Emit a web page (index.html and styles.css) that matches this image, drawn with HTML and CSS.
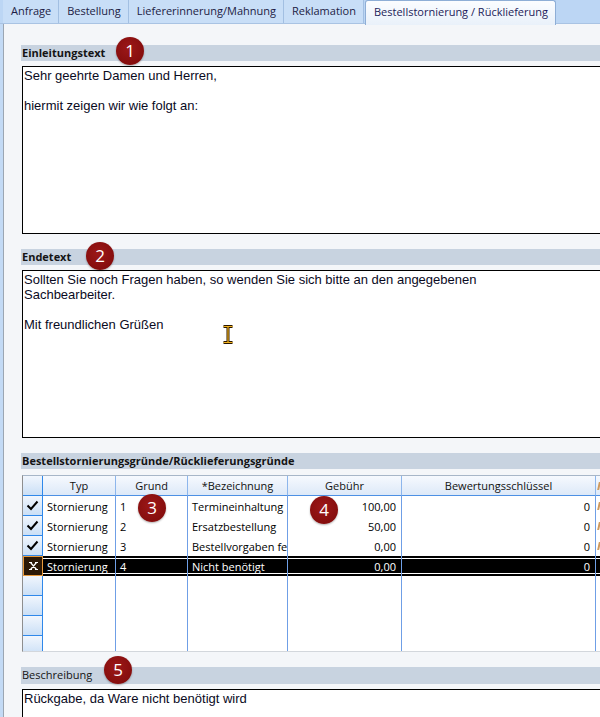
FILE: index.html
```html
<!DOCTYPE html>
<html lang="de">
<head>
    <meta charset="UTF-8">
    <meta name="viewport" content="width=device-width, initial-scale=1.0">
    <title>Bestellstornierung / Rücklieferung</title>
    <link rel="stylesheet" href="styles.css">
</head>
<body>
    <div class="tab-strip">
        <div class="tab">Anfrage</div>
        <div class="tab">Bestellung</div>
        <div class="tab">Liefererinnerung/Mahnung</div>
        <div class="tab">Reklamation</div>
        <div class="tab active">Bestellstornierung / Rücklieferung</div>
    </div>

    <div class="panel">
        <div class="group">
            <div class="group-title">Einleitungstext<span class="badge badge-1">1</span></div>
            <div class="memo">Sehr geehrte Damen und Herren,

hiermit zeigen wir wie folgt an:</div>
        </div>

        <div class="group">
            <div class="group-title">Endetext<span class="badge badge-2">2</span></div>
            <div class="memo">Sollten Sie noch Fragen haben, so wenden Sie sich bitte an den angegebenen
Sachbearbeiter.

Mit freundlichen Grüßen<svg class="ibeam" width="12" height="19" viewBox="0 0 12 19"><path d="M1.5 1.5h9M6 1.5v16M1.5 17.5h9" stroke="#2b1800" stroke-width="3" fill="none"/><path d="M1.5 1.5h9M6 1.5v16M1.5 17.5h9" stroke="#f2b21c" stroke-width="1.2" fill="none"/></svg></div>
        </div>

        <div class="group">
            <div class="group-title">Bestellstornierungsgründe/Rücklieferungsgründe</div>
            <div class="grid-wrap">
                <span class="badge badge-3">3</span>
                <span class="badge badge-4">4</span>
                <table class="grid">
                    <thead>
                        <tr>
                            <th class="ind c-ind"></th>
                            <th class="c-typ">Typ</th>
                            <th class="c-grund">Grund</th>
                            <th class="c-bez">*Bezeichnung</th>
                            <th class="c-geb">Gebühr</th>
                            <th class="c-bew">Bewertungsschlüssel</th>
                            <th class="c-extra extra"><span class="mark"></span></th>
                        </tr>
                    </thead>
                    <tbody>
                        <tr>
                            <td class="ind"><svg width="13" height="11" viewBox="0 0 13 11"><path d="M1.5 5.5l3.5 3.5 6.5-7.5" stroke="#000" stroke-width="2" fill="none"/></svg></td>
                            <td>Stornierung</td>
                            <td>1</td>
                            <td>Termineinhaltung</td>
                            <td class="num">100,00</td>
                            <td class="num">0</td>
                            <td class="extra"><span class="mark"></span></td>
                        </tr>
                        <tr>
                            <td class="ind"><svg width="13" height="11" viewBox="0 0 13 11"><path d="M1.5 5.5l3.5 3.5 6.5-7.5" stroke="#000" stroke-width="2" fill="none"/></svg></td>
                            <td>Stornierung</td>
                            <td>2</td>
                            <td>Ersatzbestellung</td>
                            <td class="num">50,00</td>
                            <td class="num">0</td>
                            <td class="extra"><span class="mark"></span></td>
                        </tr>
                        <tr>
                            <td class="ind"><svg width="13" height="11" viewBox="0 0 13 11"><path d="M1.5 5.5l3.5 3.5 6.5-7.5" stroke="#000" stroke-width="2" fill="none"/></svg></td>
                            <td>Stornierung</td>
                            <td>3</td>
                            <td>Bestellvorgaben fehlerhaft</td>
                            <td class="num">0,00</td>
                            <td class="num">0</td>
                            <td class="extra"><span class="mark"></span></td>
                        </tr>
                        <tr class="selected">
                            <td class="ind"><svg width="11" height="10" viewBox="0 0 11 10"><path d="M2.5 1.5l6 7M8.5 1.5l-6 7M1 1.5h3M7 1.5h3M1 8.5h3M7 8.5h3" stroke="#fff" stroke-width="1.2" fill="none"/></svg></td>
                            <td>Stornierung</td>
                            <td>4</td>
                            <td>Nicht benötigt</td>
                            <td class="num">0,00</td>
                            <td class="num">0</td>
                            <td class="extra"></td>
                        </tr>
                        <tr class="empty"><td class="ind"></td><td></td><td></td><td></td><td></td><td></td><td></td></tr>
                        <tr class="empty"><td class="ind"></td><td></td><td></td><td></td><td></td><td></td><td></td></tr>
                        <tr class="empty"><td class="ind"></td><td></td><td></td><td></td><td></td><td></td><td></td></tr>
                        <tr class="empty"><td class="ind"></td><td></td><td></td><td></td><td></td><td></td><td></td></tr>
                    </tbody>
                </table>
            </div>
        </div>

        <div class="group">
            <div class="group-title plain">Beschreibung<span class="badge badge-5">5</span></div>
            <div class="memo memo-short">Rückgabe, da Ware nicht benötigt wird</div>
        </div>
    </div>
</body>
</html>
```

FILE: styles.css
```css
* {
    margin: 0;
    padding: 0;
    box-sizing: border-box;
}

body {
    width: 600px;
    height: 717px;
    overflow: hidden;
    background: #c3daf5;
    font-family: 'Open Sans', 'Noto Sans', sans-serif;
    font-size: 11px;
    color: #111;
}

/* tabs */
.tab-strip {
    display: flex;
    height: 24px;
    padding-left: 3px;
    background: #bcd6f4;
    border-bottom: 1px solid #a9c3e3;
}

.tab {
    height: 23px;
    line-height: 22px;
    padding: 0 7px 0 8px;
    background: #c8def7;
    border-right: 1px solid #a2bfe2;
    color: #1c1c44;
    white-space: nowrap;
}

.tab.active {
    height: 25px;
    margin-left: 1px;
    padding: 0 7px 0 8px;
    background: linear-gradient(#fbfdff, #e9f1fa);
    border: 1px solid #8eaed6;
    border-bottom: none;
    border-radius: 3px 3px 0 0;
    color: #1c1c5a;
}

/* content */
.panel {
    margin-left: 3px;
    width: 700px;
    height: 700px;
    padding: 21px 0 0 17px;
    background: #f4f6f9;
    border-left: 1px solid #9ba6b3;
}

.group {
    width: 640px;
    margin-bottom: 15px;
}

.group-title {
    position: relative;
    height: 16px;
    line-height: 16px;
    padding-left: 1px;
    margin-bottom: 5px;
    background: #c8d3e0;
    font-weight: bold;
    color: #141414;
}

.group-title.plain {
    font-weight: normal;
    height: 17px;
}

.memo {
    position: relative;
    height: 168px;
    margin-left: 1px;
    padding: 1px 1px;
    background: #fff;
    border: 1px solid #000;
    font-family: 'Liberation Sans', Arial, sans-serif;
    font-size: 13px;
    line-height: 15px;
    color: #0a0a1e;
    white-space: pre-wrap;
}

.memo-short {
    height: 60px;
}

.ibeam {
    position: absolute;
    left: 199px;
    top: 54px;
}

/* numbered callouts */
.badge {
    position: absolute;
    width: 28px;
    height: 28px;
    border-radius: 50%;
    background: radial-gradient(circle at 45% 40%, #9c1818, #7c0909);
    box-shadow: 0 1px 2px rgba(0, 0, 0, 0.3);
    color: #fff;
    font-size: 17px;
    font-weight: normal;
    line-height: 28px;
    text-align: center;
    z-index: 2;
}

.badge-1 { left: 95px; top: -8px; }
.badge-2 { left: 65px; top: -7px; }
.badge-3 { left: 115px; top: 18px; }
.badge-4 { left: 287px; top: 20px; }
.badge-5 { left: 83px; top: -11px; }

/* grid */
.grid-wrap {
    position: relative;
    height: 177px;
    margin-top: 6px;
    margin-left: 1px;
    overflow: hidden;
    background: #fff;
    border-top: 1px solid #a7b6c8;
    border-left: 1px solid #8e8e8e;
    border-bottom: 1px solid #d3d7dc;
}

.grid {
    table-layout: fixed;
    border-collapse: separate;
    border-spacing: 0;
    width: 633px;
}

.grid th,
.grid td {
    height: 20px;
    padding: 0 4px;
    white-space: nowrap;
    overflow: hidden;
    text-overflow: clip;
    font-weight: normal;
    text-align: left;
}

.grid th {
    text-align: center;
    background: linear-gradient(#f6f9fe, #dde9f8);
    border-right: 1px solid #8db6ec;
    border-bottom: 1px solid #4d90e4;
    color: #111;
}

.grid td {
    border-right: 1px solid #6f9fe6;
    color: #000;
}

.c-ind { width: 20px; }
.c-typ { width: 73px; }
.c-grund { width: 72px; }
.c-bez { width: 100px; }
.c-geb { width: 114px; }
.c-bew { width: 194px; }
.c-extra { width: 60px; }

.grid .ind {
    padding: 0;
    text-align: center;
    background: linear-gradient(#f1f6fd, #cadff6);
    border-right: 1px solid #2f88ea;
    border-bottom: 1px solid #2f88ea;
}

.grid .ind svg {
    display: block;
    margin: 0 auto;
}

.grid .num {
    text-align: right;
    padding-right: 5px;
}

.grid .extra {
    padding-left: 2px;
}

/* cut-off glyph of the next column */
.mark {
    display: block;
    width: 3px;
    height: 8px;
    border-left: 2px solid #d09a5c;
    transform: skewX(-12deg);
}

.grid tr.selected td {
    background: #000;
    color: #fff;
    box-shadow: inset 0 2px #000, inset 0 3px #fff, inset 0 -2px #000, inset 0 -3px #fff;
}

.grid tr.selected td.ind {
    background: #2c1906;
    border: 1px solid #e89a3c;
    box-shadow: none;
}
```
